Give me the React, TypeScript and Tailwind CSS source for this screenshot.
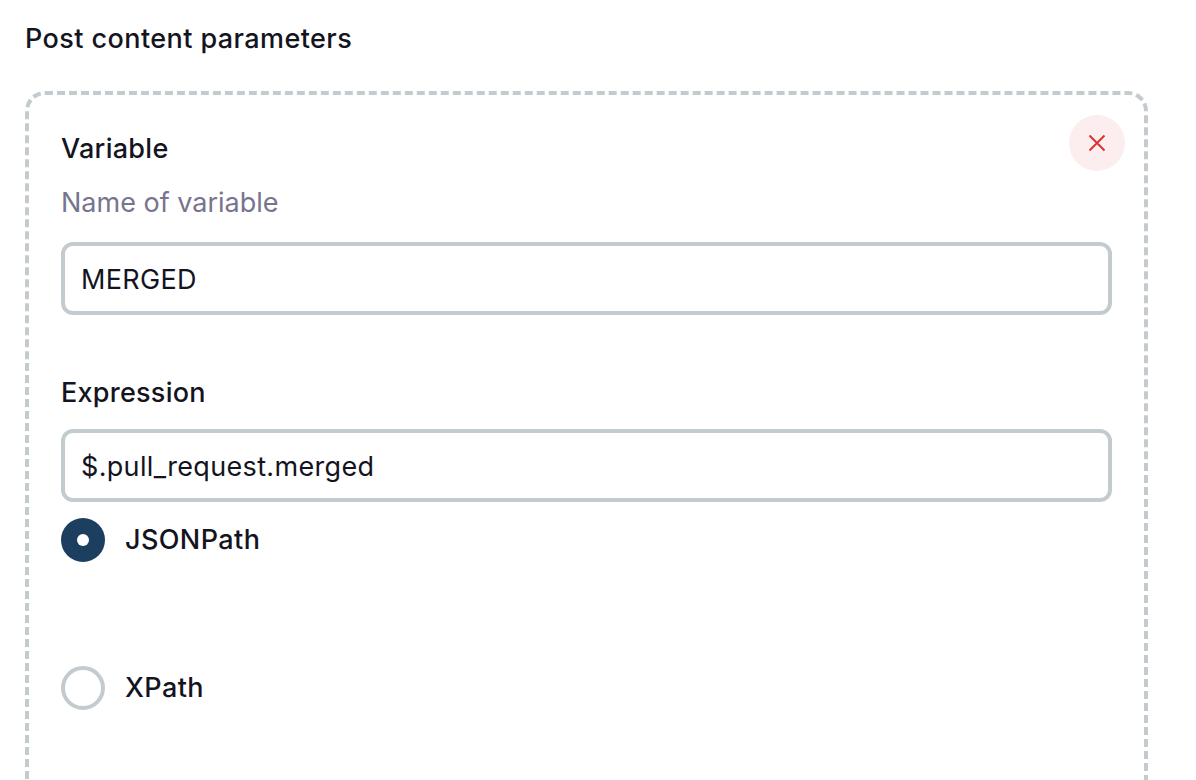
export default function App() {
  return (
    <main className="h-[780px] overflow-hidden bg-white pl-[25px] pt-[19px] font-['Inter',sans-serif] text-[27px] leading-[40px] text-[#14141f]">
      <h2 className="font-medium tracking-[0.42px]">Post content parameters</h2>
      <section className="relative mt-[32px] h-[760px] w-[1123px] rounded-[20px] border-4 border-dashed border-[#c4cbcf] px-8 pt-[34px]">
        <button aria-label="Remove" className="absolute right-[19px] top-[20px] flex size-14 items-center justify-center rounded-full bg-[#fceeee]">
          <svg width="18" height="18" viewBox="0 0 18 18" fill="none" stroke="#d93030" strokeWidth="1.9"><path d="M1.5 1.5l15 15M16.5 1.5l-15 15" /></svg>
        </button>
        <div className="font-medium tracking-[0.28px]">Variable</div>
        <div className="mt-[14px] text-[#77748e]">Name of variable</div>
        <input defaultValue="MERGED" className="mt-[19px] block h-[73px] w-[1051px] rounded-[12px] border-4 border-[#c4cbcf] px-4 pt-0.5 tracking-[0.35px]" />
        <div className="mt-[58px] font-medium tracking-[0.25px]">Expression</div>
        <input defaultValue="$.pull_request.merged" className="mt-[16px] block h-[73px] w-[1051px] rounded-[12px] border-4 border-[#c4cbcf] px-4 pt-0.5 tracking-[0.33px]" />
        <label className="mt-4 flex h-11 items-center gap-5 font-medium tracking-[0.4px]">
          <span className="flex size-11 items-center justify-center rounded-full bg-[#1c3f5f]"><span className="size-3 rounded-full bg-white" /></span>
          <span>JSONPath</span>
        </label>
        <label className="mt-[104px] flex h-11 items-center gap-5 font-medium tracking-[0.4px]">
          <span className="size-11 rounded-full border-4 border-[#c4cbcf]" />
          <span>XPath</span>
        </label>
      </section>
    </main>
  );
}
